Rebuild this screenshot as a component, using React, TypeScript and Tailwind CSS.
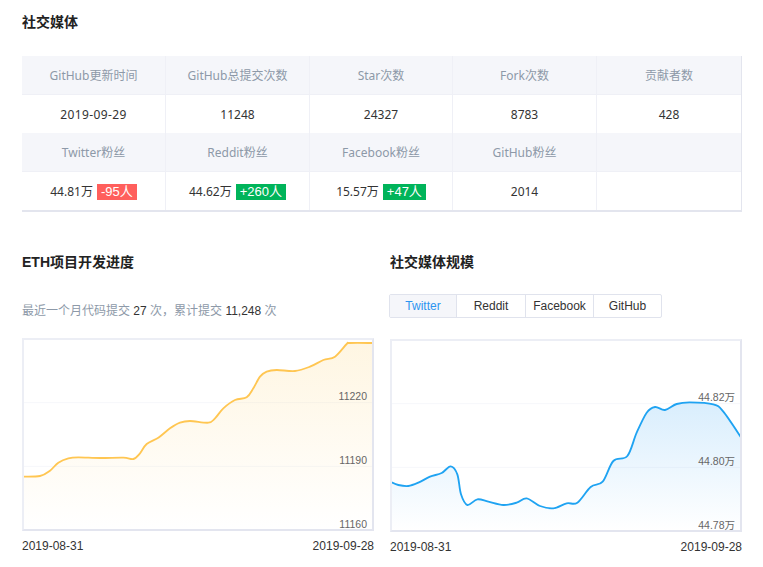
const sans = "font-['Liberation_Sans','Noto_Sans_CJK_SC',sans-serif]";
const cjk = "font-['Noto_Sans','Noto_Sans_CJK_SC',sans-serif]";

type Pt = [number, number];

// points are in reference coordinates x3, so they can be read straight off a crop
const ethPoints: Pt[] = [
  [68, 710], [120, 708], [150, 692], [175, 668], [205, 655], [235, 652], [300, 654], [370, 653],
  [400, 657], [420, 640], [440, 612], [475, 593], [510, 565], [540, 548], [570, 543], [625, 548],
  [645, 535], [670, 505], [705, 480], [740, 472], [760, 445], [780, 410], [800, 395], [830, 390],
  [885, 393], [930, 380], [970, 360], [1005, 350], [1040, 312], [1050, 309], [1120, 309],
];

const twitterPoints: Pt[] = [
  [32, 723], [55, 732], [85, 735], [115, 725], [150, 707], [185, 696], [212, 676], [232, 700],
  [243, 760], [262, 792], [292, 775], [325, 782], [370, 792], [410, 785], [440, 772], [480, 795],
  [520, 802], [560, 787], [592, 785], [632, 738], [668, 722], [700, 660], [742, 645], [770, 575],
  [800, 515], [825, 498], [855, 507], [890, 489], [930, 484], [1000, 490], [1030, 512], [1085, 592],
];

function smooth(pts: Pt[]) {
  let d = `M${pts[0][0]} ${pts[0][1]}`;
  for (let i = 0; i < pts.length - 1; i++) {
    const p0 = pts[Math.max(i - 1, 0)];
    const p1 = pts[i];
    const p2 = pts[i + 1];
    const p3 = pts[Math.min(i + 2, pts.length - 1)];
    const c1x = p1[0] + (p2[0] - p0[0]) / 6;
    const c1y = p1[1] + (p2[1] - p0[1]) / 6;
    const c2x = p2[0] - (p3[0] - p1[0]) / 6;
    const c2y = p2[1] - (p3[1] - p1[1]) / 6;
    d += ` C${c1x} ${c1y} ${c2x} ${c2y} ${p2[0]} ${p2[1]}`;
  }
  return d;
}

function Chart({
  id,
  points,
  color,
  fill,
  fillOpacity,
  originX,
  labels,
}: {
  id: string;
  points: Pt[];
  color: string;
  fill: string;
  fillOpacity: number;
  originX: number;
  labels: string[];
}) {
  const line = smooth(points);
  const last = points[points.length - 1];
  const area = `${line} L${last[0]} 870 L${points[0][0]} 870 Z`;
  return (
    <div className="relative h-[193px] w-[352px] border-2 border-[#eceef5] border-r-[#e3e5ef] border-b-[#e3e5ef]">
      <svg
        className="block h-[189px] w-[348px]"
        viewBox={`${originX} 300 1044 567`}
        preserveAspectRatio="none"
      >
        <defs>
          <linearGradient id={id} x1="0" y1="0" x2="0" y2="1">
            <stop offset="0" stopColor={fill} stopOpacity={fillOpacity} />
            <stop offset="1" stopColor={fill} stopOpacity="0" />
          </linearGradient>
        </defs>
        <path d={`M${originX} 488 H${originX + 1044}`} stroke="#f6f7fb" strokeWidth="3" />
        <path d={`M${originX} 679 H${originX + 1044}`} stroke="#f6f7fb" strokeWidth="3" />
        <path d={area} fill={`url(#${id})`} />
        <path d={line} fill="none" stroke={color} strokeWidth="5.5" strokeLinejoin="round" />
      </svg>
      <div className="absolute inset-0 flex flex-col items-end pt-[50px] pr-[5px] font-['Liberation_Sans','Noto_Sans_CJK_SC',sans-serif] text-[10.5px] leading-[13px] text-[#666]">
        {labels.map((l) => (
          <span key={l} className="h-[64px] shrink-0">
            {l}
          </span>
        ))}
      </div>
    </div>
  );
}

function Dates() {
  return (
    <div className="mt-2 flex w-[352px] justify-between text-xs leading-[14px] text-[#333]">
      <span>2019-08-31</span>
      <span>2019-09-28</span>
    </div>
  );
}

const Head = ({ children, last }: { children?: React.ReactNode; last?: boolean }) => (
  <div
    className={`flex items-center justify-center border-b border-[#eff0f6] bg-[#f5f6fa] pt-[2px] text-xs text-[#8d99a8] ${cjk} ${last ? "" : "border-r"}`}
  >
    {children}
  </div>
);

const Cell = ({ children, last }: { children?: React.ReactNode; last?: boolean }) => (
  <div
    className={`flex items-center justify-center gap-1 border-[#eff0f6] pt-[2px] text-xs text-[#333] ${cjk} ${last ? "" : "border-r"}`}
  >
    {children}
  </div>
);

const Tag = ({ up, children }: { up?: boolean; children: React.ReactNode }) => (
  <span
    className={`flex h-4 items-center px-1 font-['Liberation_Sans','Noto_Sans_CJK_SC',sans-serif] text-[13px] leading-4 text-white ${up ? "bg-[#00b45a]" : "bg-[#ff5f5c]"}`}
  >
    {children}
  </span>
);

const tabs = ["Twitter", "Reddit", "Facebook", "GitHub"];

export default function App() {
  return (
    <div className={`h-[567px] w-[763px] overflow-hidden bg-white pt-[14px] pl-[22px] ${sans}`}>
      <h2 className="text-sm leading-[16px] font-bold text-[#222]">社交媒体</h2>

      <div className="mt-[26px] w-[720px] border-r border-b-2 border-[#e3e5ee]">
        <div className="grid grid-cols-[144px_144px_143px_144px_144px] grid-rows-[39px_38px_39px_38px]">
          <Head>GitHub更新时间</Head>
          <Head>GitHub总提交次数</Head>
          <Head>Star次数</Head>
          <Head>Fork次数</Head>
          <Head last>贡献者数</Head>

          <Cell>
            <span className="tracking-[0.4px]">2019-09-29</span>
          </Cell>
          <Cell>11248</Cell>
          <Cell>24327</Cell>
          <Cell>8783</Cell>
          <Cell last>428</Cell>

          <Head>Twitter粉丝</Head>
          <Head>Reddit粉丝</Head>
          <Head>Facebook粉丝</Head>
          <Head>GitHub粉丝</Head>
          <Head last />

          <Cell>
            44.81万<Tag>-95人</Tag>
          </Cell>
          <Cell>
            44.62万<Tag up>+260人</Tag>
          </Cell>
          <Cell>
            15.57万<Tag up>+47人</Tag>
          </Cell>
          <Cell>2014</Cell>
          <Cell last />
        </div>
      </div>

      <div className="mt-[42px] flex gap-4">
        <section className="w-[352px]">
          <h2 className="text-sm leading-4 font-bold text-[#222]">ETH项目开发进度</h2>
          <p className="mt-[33px] h-[35px] text-xs leading-4 text-[#8d99a8]">
            最近一个月代码提交 <span className="text-[#333]">27</span> 次，累计提交{" "}
            <span className="text-[#333]">11,248</span> 次
          </p>
          <Chart
            id="eth"
            points={ethPoints}
            color="#ffc652"
            fill="#fdc54a"
            fillOpacity={0.16}
            originX={72}
            labels={["11220", "11190", "11160"]}
          />
          <Dates />
        </section>

        <section className="w-[352px]">
          <h2 className="text-sm leading-4 font-bold text-[#222]">社交媒体规模</h2>
          <div className="mt-[24px] mb-[21px] -ml-px flex h-6 w-[273px] rounded-[2px] border border-[#e0e3ed] text-xs">
            {tabs.map((t, i) => (
              <div
                key={t}
                className={`flex items-center justify-center ${i < 3 ? "border-r border-[#e0e3ed]" : ""} ${i === 0 ? "w-[67px] bg-[#f5f6fa] text-[#2d95f0]" : "text-[#333]"} ${i === 1 ? "w-[69px]" : ""} ${i === 2 ? "w-[68px]" : ""} ${i === 3 ? "flex-1" : ""}`}
              >
                {t}
              </div>
            ))}
          </div>
          <Chart
            id="tw"
            points={twitterPoints}
            color="#1fa3f2"
            fill="#41a9f5"
            fillOpacity={0.2}
            originX={36}
            labels={["44.82万", "44.80万", "44.78万"]}
          />
          <Dates />
        </section>
      </div>
    </div>
  );
}
